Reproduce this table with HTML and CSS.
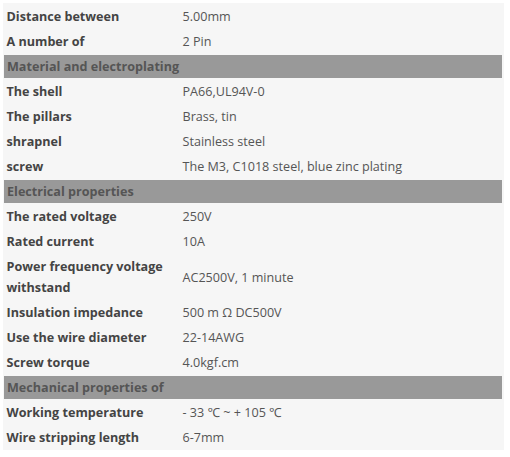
FILE: index.html
```html
<!DOCTYPE html>
<html>
<head>
<meta charset="utf-8">
<link rel="stylesheet" href="styles.css">
</head>
<body>
<table class="spec">
  <tbody>
    <tr><th>Distance between</th><td>5.00mm</td></tr>
    <tr><th>A number of</th><td>2 Pin</td></tr>
    <tr class="group"><th colspan="2">Material and electroplating</th></tr>
    <tr><th>The shell</th><td>PA66,UL94V-0</td></tr>
    <tr><th>The pillars</th><td>Brass, tin</td></tr>
    <tr><th>shrapnel</th><td>Stainless steel</td></tr>
    <tr><th>screw</th><td>The M3, C1018 steel, blue zinc plating</td></tr>
    <tr class="group"><th colspan="2">Electrical properties</th></tr>
    <tr><th>The rated voltage</th><td>250V</td></tr>
    <tr><th>Rated current</th><td>10A</td></tr>
    <tr class="tall"><th>Power frequency voltage withstand</th><td>AC2500V, 1 minute</td></tr>
    <tr><th>Insulation impedance</th><td>500 m Ω DC500V</td></tr>
    <tr><th>Use the wire diameter</th><td>22-14AWG</td></tr>
    <tr><th>Screw torque</th><td>4.0kgf.cm</td></tr>
    <tr class="group"><th colspan="2">Mechanical properties of</th></tr>
    <tr><th>Working temperature</th><td>- 33 ℃ ~ + 105 ℃</td></tr>
    <tr><th>Wire stripping length</th><td>6-7mm</td></tr>
  </tbody>
</table>
</body>
</html>
```
FILE: styles.css
```css
html, body {
  margin: 0;
  padding: 0;
  background: #ffffff;
}
body {
  padding: 3px 0 0 3px;
  font-family: "Open Sans", "Noto Sans", sans-serif;
  font-size: 12.6px;
}
.spec {
  width: 501px;
  border-collapse: collapse;
  background: #f6f6f6;
}
.spec th,
.spec td {
  padding: 2px 3px;
  line-height: 21px;
  text-align: left;
  vertical-align: middle;
}
.spec tr:first-child th,
.spec tr:first-child td {
  padding-top: 3px;
}
.spec th {
  width: 170px;
  font-weight: bold;
  color: #444444;
}
.spec td {
  color: #555555;
}
.spec .group th {
  background: #999999;
  color: #555555;
  padding: 1px 3px;
  border-top: 1px solid #f6f6f6;
  border-bottom: 1px solid #f6f6f6;
  border-left: 1px solid #f6f6f6;
  border-right: 2px solid #f6f6f6;
}
```
